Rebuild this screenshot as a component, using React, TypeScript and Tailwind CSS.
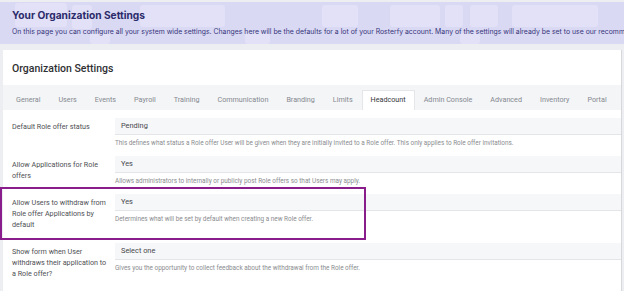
import React from "react";

const tabs = ["General","Users","Events","Payroll","Training","Communication","Branding","Limits","Headcount","Admin Console","Advanced","Inventory","Portal"];

type Row = { label: string[]; value: string; help: string; h: string; boxed?: boolean };

const rows: Row[] = [
  { label: ["Default Role offer status"], value: "Pending", help: "This defines what status a Role offer User will be given when they are initially invited to a Role offer. This only applies to Role offer invitations.", h: "h-[38px]" },
  { label: ["Allow Applications for Role", "offers"], value: "Yes", help: "Allows administrators to internally or publicly post Role offers so that Users may apply.", h: "h-[38px]" },
  { label: ["Allow Users to withdraw from", "Role offer Applications by", "default"], value: "Yes", help: "Determines what will be set by default when creating a new Role offer.", h: "h-[49px]", boxed: true },
  { label: ["Show form when User", "withdraws their application to", "a Role offer?"], value: "Select one", help: "Gives you the opportunity to collect feedback about the withdrawal from the Role offer.", h: "h-[40px]" },
];

const blobs = [
  "left-[15px] top-[1px] w-[52px] h-[24px]",
  "left-[72px] top-[3px] w-[20px] h-[24px]",
  "left-[90px] top-[31px] w-[20px] h-[11px]",
  "left-[140px] top-[3px] w-[85px] h-[22px]",
  "left-[245px] top-[31px] w-[25px] h-[11px]",
  "left-[322px] top-[3px] w-[36px] h-[22px]",
  "left-[390px] top-[3px] w-[50px] h-[22px]",
  "left-[445px] top-[3px] w-[18px] h-[22px]",
  "left-[470px] top-[3px] w-[28px] h-[22px]",
  "left-[512px] top-[3px] w-[86px] h-[22px]",
  "left-[460px] top-[31px] w-[20px] h-[11px]",
];

export default function App() {
  return (
    <div className="w-[624px] h-[291px] overflow-hidden bg-[#eceef1] pt-[2px]" style={{ fontFamily: "Roboto, 'Liberation Sans', sans-serif" }}>
      <div className="relative h-[42px] bg-[#dad9f4] overflow-hidden">
        {blobs.map((b, i) => (
          <div key={i} className={`absolute ${b} rounded-[3px] bg-[#e2e1f7]`} />
        ))}
        <div className="relative pl-[12px] pt-[6px]" style={{ fontFamily: "Inter, 'Liberation Sans', sans-serif" }}>
          <div className="text-[10.2px] leading-[14px] font-bold text-[#2c2b6b] whitespace-nowrap">Your Organization Settings</div>
          <div className="mt-[5px] text-[6.88px] leading-[10px] text-[#37367a] whitespace-nowrap overflow-hidden">
            On this page you can configure all your system wide settings. Changes here will be the defaults for a lot of your Rosterfy account. Many of the settings will already be set to use our recommended settings.
          </div>
        </div>
      </div>
      <div className="mt-[6px] ml-[3px] w-[619px] border-r border-[#d6d8dc] bg-white h-[300px]">
        <div className="h-[35px] flex items-center pt-[3px] pl-[9px] text-[10.5px] font-medium text-[#2f3033]">Organization Settings</div>
        <div className="h-[25px] bg-[#f4f5f7] flex items-end pl-[4px]">
          {tabs.map((t) => (
            <div
              key={t}
              className={
                t === "Headcount"
                  ? "h-[20px] px-[8px] flex items-center whitespace-nowrap bg-white border border-b-0 border-[#e4e6ea] text-[7.2px] text-[#35373b]"
                  : "h-[20px] px-[8px] flex items-center whitespace-nowrap border border-transparent text-[7.2px] text-[#858990]"
              }
            >
              {t}
            </div>
          ))}
        </div>
        <div className="pt-[8px]">
          {rows.map((r, i) => (
            <div key={i} className={`relative flex ${r.h}`}>
              {r.boxed && (
                <div className="absolute left-[-3px] top-[-7px] w-[366px] h-[53px] border-[2px] border-[#8a1d8c]" />
              )}
              <div className="w-[112px] pl-[9px] pt-[3px] text-[7.2px] leading-[11px] text-[#4e5054]">
                {r.label.map((l, j) => (
                  <div key={j} className="whitespace-nowrap">{l}</div>
                ))}
              </div>
              <div className="flex-1">
                <div className="h-[17px] bg-[#f6f7f9] border-b border-[#e3e5e9] flex items-center pl-[6px] text-[7.4px] text-[#46484c]">
                  {r.value}
                </div>
                <div className="mt-[3px] text-[6.4px] leading-[10px] text-[#8a8c90] whitespace-nowrap">{r.help}</div>
              </div>
            </div>
          ))}
        </div>
      </div>
    </div>
  );
}
